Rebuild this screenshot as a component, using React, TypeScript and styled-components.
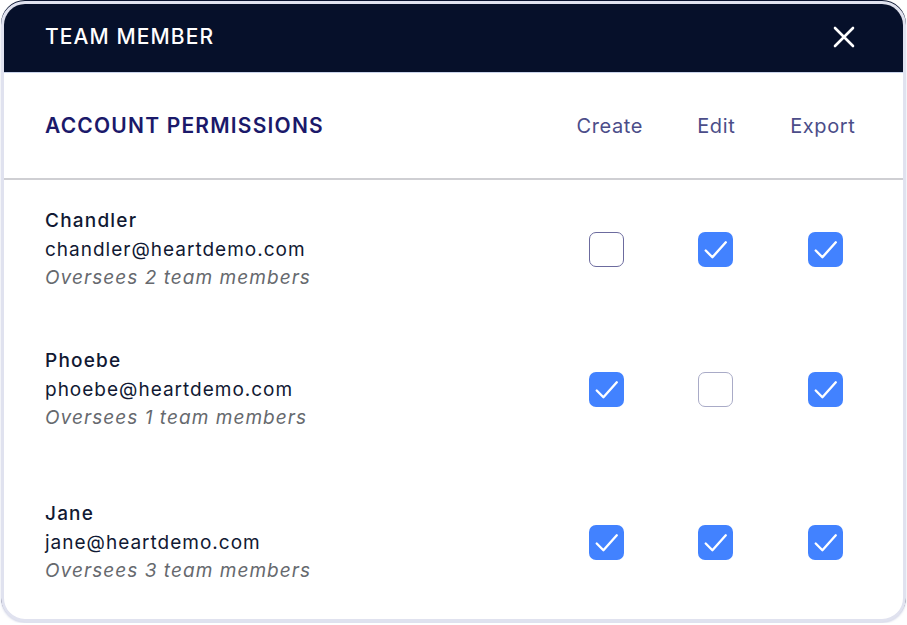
import React from "react";
import styled, { createGlobalStyle } from "styled-components";

type Perm = "create" | "edit" | "export";

interface Member {
    name: string;
    email: string;
    oversees: number;
    spacing: number;
    perms: Record<Perm, boolean>;
    focused?: Perm;
}

const members: Member[] = [
    {
        name: "Chandler",
        email: "chandler@heartdemo.com",
        oversees: 2,
        spacing: 27,
        perms: { create: false, edit: true, export: true },
        focused: "create",
    },
    {
        name: "Phoebe",
        email: "phoebe@heartdemo.com",
        oversees: 1,
        spacing: 54.5,
        perms: { create: true, edit: false, export: true },
    },
    {
        name: "Jane",
        email: "jane@heartdemo.com",
        oversees: 3,
        spacing: 67.5,
        perms: { create: true, edit: true, export: true },
    },
];

const columns: { key: Perm; label: string }[] = [
    { key: "create", label: "Create" },
    { key: "edit", label: "Edit" },
    { key: "export", label: "Export" },
];

const GlobalStyle = createGlobalStyle`
    html, body {
        margin: 0;
        background: #ffffff;
        font-family: Inter, "Noto Sans", sans-serif;
    }
`;

const Check = ({ checked, focused }: { checked: boolean; focused?: boolean }) => (
    <Box $checked={checked} $focused={focused}>
        {checked && (
            <svg width="35" height="35" viewBox="0 0 34 34">
                <path d="M7.5 18 L14 24.5 L27 10" fill="none" stroke="#fff" strokeWidth="2.3" strokeLinecap="round" strokeLinejoin="round" />
            </svg>
        )}
    </Box>
);

export default function App() {
    return (
        <Page>
            <GlobalStyle />
            <Card>
                <Header>
                    <Title>TEAM MEMBER</Title>
                    <CloseButton aria-label="Close">
                        <svg width="24" height="24" viewBox="0 0 24 24">
                            <path d="M3 3 L21 21 M21 3 L3 21" stroke="#fff" strokeWidth="2.6" strokeLinecap="round" />
                        </svg>
                    </CloseButton>
                </Header>
                <PermHead>
                    <SectionTitle>ACCOUNT PERMISSIONS</SectionTitle>
                    <HeadCols>
                        {columns.map((c) => (
                            <ColLabel key={c.key}>{c.label}</ColLabel>
                        ))}
                    </HeadCols>
                </PermHead>
                <List>
                    {members.map((m) => (
                        <Row key={m.email} $spacing={m.spacing}>
                            <Info>
                                <Name>{m.name}</Name>
                                <Email>{m.email}</Email>
                                <Note>Oversees {m.oversees} team members</Note>
                            </Info>
                            <Cols>
                                {columns.map((c) => (
                                    <Cell key={c.key}>
                                        <Check checked={m.perms[c.key]} focused={m.focused === c.key} />
                                    </Cell>
                                ))}
                            </Cols>
                        </Row>
                    ))}
                </List>
            </Card>
        </Page>
    );
}

const Page = styled.div`
    padding: 1px;
    width: 905px;
    height: 621px;
`;

const Card = styled.div`
    box-sizing: border-box;
    width: 905px;
    height: 621px;
    border: 3px solid #e0e2ef;
    border-radius: 24px;
    overflow: hidden;
    background: #fff;
    box-shadow: 0 -1px 0 0 #0b1530, 0 1px 2px rgba(170, 176, 210, 0.5);
    display: flex;
    flex-direction: column;
`;

const Header = styled.div`
    height: 69px;
    flex: none;
    background: #06102a;
    border-bottom: 1px solid #c9d3ea;
    box-sizing: border-box;
    display: flex;
    align-items: center;
    justify-content: space-between;
    padding: 0 47px 0 41px;
`;

const Title = styled.div`
    color: #ffffff;
    font-size: 21px;
    font-weight: 500;
    letter-spacing: 1.1px;
    margin-top: -3px;
`;

const CloseButton = styled.button`
    border: 0;
    background: none;
    padding: 0;
    width: 24px;
    height: 24px;
    display: flex;
    margin-top: -3px;
`;

const PermHead = styled.div`
    height: 107px;
    flex: none;
    box-sizing: border-box;
    border-bottom: 2px solid #cfcfd3;
    display: flex;
    align-items: center;
    justify-content: space-between;
    padding: 0 27px 0 41px;
`;

const SectionTitle = styled.div`
    color: #1b196a;
    font-size: 21px;
    font-weight: 600;
    letter-spacing: 1.2px;
`;

const HeadCols = styled.div`
    display: grid;
    grid-template-columns: repeat(3, 106.5px);
    align-items: center;
`;

const ColLabel = styled.div`
    text-align: center;
    color: #4b4d89;
    font-size: 20px;
    font-weight: 400;
    letter-spacing: 0.6px;
`;

const List = styled.div`
    display: flex;
    flex-direction: column;
`;

const Row = styled.div<{ $spacing: number }>`
    display: flex;
    align-items: center;
    justify-content: space-between;
    padding: 0 22.5px 0 41px;
    margin-top: ${(p) => p.$spacing}px;
`;

const Cols = styled.div`
    display: grid;
    grid-template-columns: repeat(3, 109.75px);
    align-items: center;
`;

const Info = styled.div`
    display: flex;
    flex-direction: column;
    font-size: 19px;
    line-height: 28.5px;
    letter-spacing: 1px;
`;

const Name = styled.div`
    color: #111933;
    font-weight: 500;
    letter-spacing: 1.2px;
`;

const Email = styled.div`
    color: #111933;
`;

const Note = styled.div`
    color: #66696e;
    font-style: italic;
    letter-spacing: 1.05px;
`;

const Cell = styled.div`
    display: flex;
    justify-content: center;
`;

const Box = styled.div<{ $checked: boolean; $focused?: boolean }>`
    box-sizing: border-box;
    width: 35px;
    height: 35px;
    border-radius: 7px;
    background: ${(p) => (p.$checked ? "#4282ff" : "#fff")};
    border: ${(p) => (p.$checked ? "none" : `1px solid ${p.$focused ? "#6c6b9e" : "#a9abc7"}`)};
    display: flex;
    align-items: center;
    justify-content: center;
`;
